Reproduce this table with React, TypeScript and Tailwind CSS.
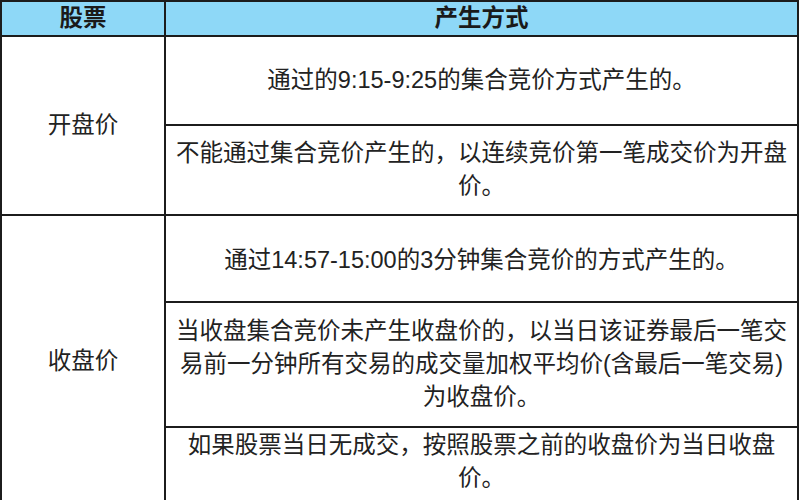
import React from 'react';

const cell = 'border-2 border-[#1c1c1c] text-center align-middle px-2';

const App: React.FC = () => {
  return (
    <div
      className="w-[800px] h-[500px] overflow-hidden bg-white text-[#222] text-[23.5px] leading-[33px]"
      style={{ fontFamily: '"Liberation Sans", "Noto Sans CJK SC", sans-serif' }}
    >
      <table className="table-fixed border-collapse w-[799px]">
        <colgroup>
          <col className="w-[164px]" />
          <col />
        </colgroup>
        <thead>
          <tr className="h-[34px] bg-[#8ed8f7]">
            <th className={`${cell} font-bold text-[#1a1a1a]`}>股票</th>
            <th className={`${cell} font-bold text-[#1a1a1a]`}>产生方式</th>
          </tr>
        </thead>
        <tbody>
          <tr className="h-[89px]">
            <td className={cell} rowSpan={2}>开盘价</td>
            <td className={cell}>通过的9:15-9:25的集合竞价方式产生的。</td>
          </tr>
          <tr className="h-[90px]">
            <td className={cell}>
              不能通过集合竞价产生的，以连续竞价第一笔成交价为开盘
              <br />
              价。
            </td>
          </tr>
          <tr className="h-[87px]">
            <td className={`${cell} pt-1`} rowSpan={3}>收盘价</td>
            <td className={`${cell} pt-1`}>通过14:57-15:00的3分钟集合竞价的方式产生的。</td>
          </tr>
          <tr className="h-[125px]">
            <td className={cell}>
              当收盘集合竞价未产生收盘价的，以当日该证券最后一笔交
              <br />
              易前一分钟所有交易的成交量加权平均价(含最后一笔交易)
              <br />
              为收盘价。
            </td>
          </tr>
          <tr className="h-[76px]">
            <td className={`${cell} pb-[6px]`}>
              如果股票当日无成交，按照股票之前的收盘价为当日收盘
              <br />
              价。
            </td>
          </tr>
        </tbody>
      </table>
    </div>
  );
};

export default App;
